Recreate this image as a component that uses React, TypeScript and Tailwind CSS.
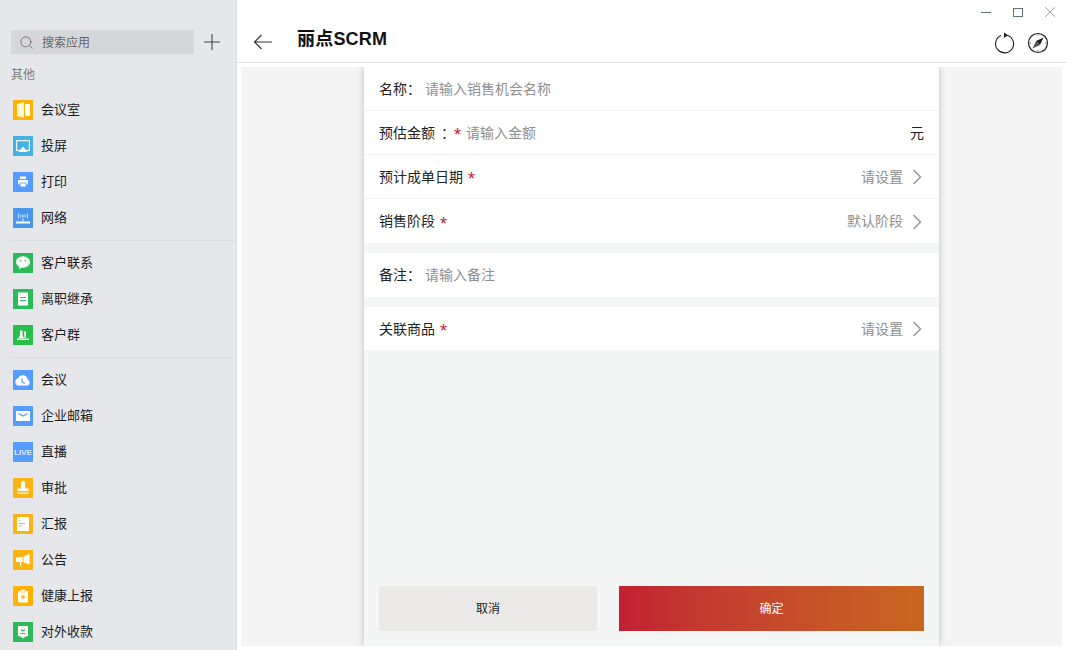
import { Plus, Search, X } from 'lucide-react';
import type { ReactNode } from 'react';

const FONT = "font-['Liberation_Sans','Noto_Sans_CJK_SC',sans-serif]";

const Tile = ({ bg, children }: { bg: string; children: ReactNode }) => (
  <svg width="20" height="20" viewBox="0 0 20 20" className="shrink-0">
    <rect width="20" height="20" fill={bg} />
    {children}
  </svg>
);

const icons: Record<string, ReactNode> = {
  room: (
    <Tile bg="#ffb300">
      <path d="M4 4l7-2v16l-7-2z" fill="#fff" opacity="0.85" />
      <rect x="12" y="4" width="5" height="12" fill="#fff" />
    </Tile>
  ),
  cast: (
    <Tile bg="#44b2e4">
      <path d="M3 4h14v11h-3.500l-1-1.200h3.300v-8.600h-11.600v8.600h3.300l-1 1.200h-3.500z" fill="#fff" opacity="0.9" />
      <path d="M10 10.500l4.500 5.500h-9z" fill="#fff" />
    </Tile>
  ),
  print: (
    <Tile bg="#549cff">
      <rect x="7" y="4.500" width="6" height="2.500" fill="#fff" />
      <rect x="5" y="8" width="10" height="4.500" rx="1" fill="#fff" />
      <rect x="7" y="11" width="6" height="4" fill="#fff" stroke="#549cff" strokeWidth="0.800" />
    </Tile>
  ),
  network: (
    <Tile bg="#4a97ed">
      <rect x="3" y="13.500" width="14" height="2" fill="#fff" />
      <path d="M6 5.500q-1.500 2.500 0 5M14 5.500q1.500 2.500 0 5M8 6.500v3M12 6.500v3" stroke="#dce9fb" fill="none" />
      <rect x="9.500" y="7" width="1" height="2" fill="#fff" />
      <rect x="9.500" y="10" width="1" height="3.500" fill="#dce9fb" />
    </Tile>
  ),
  chat: (
    <Tile bg="#2dba58">
      <ellipse cx="10" cy="9" rx="7" ry="5.800" fill="#fff" />
      <path d="M6.500 13l-.5 3.500 3.500-2.500z" fill="#fff" />
      <circle cx="7.800" cy="7.800" r="0.800" fill="#2dba58" />
      <circle cx="12.200" cy="7.800" r="0.800" fill="#2dba58" />
    </Tile>
  ),
  doc: (
    <Tile bg="#2dba58">
      <rect x="5" y="3.500" width="10" height="13" fill="#fff" />
      <path d="M7 8.500h6M7 11.500h6" stroke="#2dba58" />
    </Tile>
  ),
  group: (
    <Tile bg="#29c04a">
      <path d="M7 5.500h2.500v5l1.500 2.500h-5.500l1.500-2.500zM11 6.500h2v3.500l-.5 3h-1z" fill="#fff" />
      <rect x="4" y="13.500" width="12" height="1.500" fill="#fff" />
    </Tile>
  ),
  cloud: (
    <Tile bg="#549cff">
      <path d="M5.500 15.500a3.500 3.500 0 0 1-.5-6.900 5 5 0 0 1 9.700 1.200 3 3 0 0 1-.2 5.700z" fill="#fff" />
      <path d="M9 8.500v3.500l3 1.500" stroke="#549cff" strokeWidth="1.200" fill="none" />
    </Tile>
  ),
  mail: (
    <Tile bg="#549cff">
      <rect x="3" y="5" width="14" height="10" fill="#fff" />
      <path d="M5.500 7.500l4.500 2.500 4.500-2.500" stroke="#549cff" strokeWidth="1.200" fill="none" />
    </Tile>
  ),
  live: (
    <Tile bg="#549cff">
      <text x="10" y="13" textAnchor="middle" fontSize="8" fontWeight="700" fill="#dbe9ff" fontFamily="'Liberation Sans', sans-serif">
        LIVE
      </text>
    </Tile>
  ),
  stamp: (
    <Tile bg="#fcb415">
      <path d="M8 5a2 2 0 0 1 4 0v3.500l.5 2h3v2.500h-11v-2.500h3l.5-2z" fill="#fff" />
      <rect x="4.500" y="14.500" width="11" height="1.200" fill="#fff" />
    </Tile>
  ),
  report: (
    <Tile bg="#fcb415">
      <rect x="4" y="3" width="12" height="14" fill="#fff" />
      <path d="M6 6.500h1M6 9.500h6M6 12h3" stroke="#fcb415" strokeWidth="1.200" />
    </Tile>
  ),
  notice: (
    <Tile bg="#fcb415">
      <path d="M3 7.500l6.500-.5v5H3z" fill="#fff" />
      <path d="M10.500 6.500l6-2.500v10.500l-6-2.200z" fill="#fff" />
      <rect x="7" y="12" width="1.300" height="4" fill="#fff" />
    </Tile>
  ),
  health: (
    <Tile bg="#ffb300">
      <rect x="5" y="5" width="10" height="11.500" rx="1" fill="#fff" />
      <rect x="7.500" y="3.500" width="5" height="2.500" fill="#fff" stroke="#ffb300" strokeWidth="0.600" />
      <path d="M10 9v4M8 11h4" stroke="#ffb300" strokeWidth="1.300" />
    </Tile>
  ),
  pay: (
    <Tile bg="#2dba58">
      <path d="M5 4h10v10l-2.500.5-2.500 2-2.500-2-2.500-.5z" fill="#fff" />
      <path d="M8 7.500l2 1.500 2-1.500M7.500 11.500h5" stroke="#2dba58" strokeWidth="1.200" fill="none" />
    </Tile>
  ),
};

const groups = [
  [
    ['room', '会议室'],
    ['cast', '投屏'],
    ['print', '打印'],
    ['network', '网络'],
  ],
  [
    ['chat', '客户联系'],
    ['doc', '离职继承'],
    ['group', '客户群'],
  ],
  [
    ['cloud', '会议'],
    ['mail', '企业邮箱'],
    ['live', '直播'],
    ['stamp', '审批'],
    ['report', '汇报'],
    ['notice', '公告'],
    ['health', '健康上报'],
    ['pay', '对外收款'],
  ],
];

const Star = ({ className = 'ml-[5px]' }: { className?: string }) => (
  <span className={`translate-y-[2px] text-[18px] leading-none text-[#c32136] ${className}`}>*</span>
);

const Row = ({ children, line = false, h = 'h-[44px]' }: { children: ReactNode; line?: boolean; h?: string }) => (
  <div className={`flex items-center bg-white px-[15px] pt-[1px] ${h} ${line ? 'border-b border-[#f2f2f2]' : ''}`}>
    {children}
  </div>
);

const Setting = ({ value }: { value: string }) => (
  <div className="ml-auto flex items-center text-[#8f8f8f]">
    <span>{value}</span>
    <svg width="10" height="16" viewBox="0 0 10 16" className="ml-[9px] mr-[2px]">
      <path d="M1.500 1l7 7-7 7" stroke="#999" strokeWidth="1.500" fill="none" />
    </svg>
  </div>
);

export default function App() {
  return (
    <div className={`${FONT} flex h-[650px] w-[1066px] overflow-hidden bg-white text-[14px] text-[#222]`}>
      <aside className="flex h-full w-[237px] shrink-0 flex-col overflow-hidden border-r border-[#dcdcdf] bg-[#e6e7eb]">
        <div className="flex items-center pl-[11px] pt-[30px]">
          <div className="flex h-[24px] w-[183px] items-center bg-[#d6d7da] pl-[8px] pt-[1px] text-[12px] text-[#666]">
            <Search size={15} strokeWidth={1.300} className="text-[#666]" />
            <span className="ml-[8px]">搜索应用</span>
          </div>
          <Plus size={26} strokeWidth={1} className="-my-[1px] ml-[5px] text-[#444]" />
        </div>
        <div className="ml-[11px] mt-[13px] text-[12px] leading-[17px] text-[#7a7a7a]">其他</div>
        <div className="mt-[8px]">
          {groups.map((items, i) => (
            <div key={i} className={i > 0 ? 'ml-[11px] mt-[4px] border-t border-[#dcdde1] pt-[4px]' : ''}>
              {items.map(([icon, label]) => (
                <div key={label} className={`flex h-[36px] items-center ${i > 0 ? 'pl-[2px]' : 'pl-[13px]'}`}>
                  {icons[icon]}
                  <span className="ml-[8px] text-[13px] text-[#1c1c1c]">{label}</span>
                </div>
              ))}
            </div>
          ))}
        </div>
      </aside>

      <main className="flex min-w-0 flex-1 flex-col">
        <div className="flex h-[24px] items-center justify-end text-[#66707a]">
          <div className="h-[1px] w-[10px] bg-[#66707a]" />
          <div className="ml-[22px] h-[9px] w-[10px] border border-[#66707a]" />
          <X size={18} strokeWidth={0.900} className="ml-[18px] mr-[7px]" />
        </div>
        <header className="flex h-[39px] items-start border-b border-[#e3e3e3] pl-[16px] pr-[17px]">
          <svg width="20" height="16" viewBox="0 0 20 16" className="mt-[10px]">
            <path d="M19 8H1.500M8.500 1L1.500 8l7 7" stroke="#333" strokeWidth="1.200" fill="none" />
          </svg>
          <h1 className="ml-[24px] mt-[2px] text-[18px] font-bold leading-[26px] tracking-[0.2px] text-[#111]">丽点SCRM</h1>
          <svg width="22" height="24" viewBox="0 0 22 24" className="ml-auto mt-[6px]">
            <path d="M13 5.200A9 9 0 1 1 7 5.600" stroke="#222" strokeWidth="1.100" fill="none" />
            <path d="M10 2.500l4 2.800-4 2.800z" fill="#222" />
          </svg>
          <svg width="22" height="22" viewBox="0 0 22 22" className="ml-[11px] mt-[8px]">
            <circle cx="11" cy="11" r="9.500" stroke="#222" strokeWidth="1.200" fill="none" />
            <path d="M16.500 5.500l-3.500 7.500-4-4z" fill="#222" />
            <path d="M5.500 16.500l3.500-7.500 4 4z" fill="#222" opacity="0.75" />
            <path d="M11 2.500v1.500M11 18v1.500M2.500 11h1.500M18 11h1.500" stroke="#222" strokeWidth="0.600" />
          </svg>
        </header>

        <div className="m-[4px] flex min-h-0 flex-1 justify-center overflow-hidden bg-[#f4f4f4]">
          <div className="flex w-[575px] flex-col bg-[#f4f5f5] shadow-[0_0_7px_rgba(0,0,0,0.22)]">
            <Row line>
              <span>名称：</span>
              <span className="ml-[5px] -translate-x-px text-[#8f8f8f]">请输入销售机会名称</span>
            </Row>
            <Row line>
              <span>预估金额</span>
              <span className="ml-[6px]">：</span>
              <Star className="-ml-[1px]" />
              <span className="ml-[5px] text-[#8f8f8f]">请输入金额</span>
              <span className="ml-auto">元</span>
            </Row>
            <Row line>
              <span>预计成单日期</span>
              <Star />
              <Setting value="请设置" />
            </Row>
            <Row>
              <span>销售阶段</span>
              <Star />
              <Setting value="默认阶段" />
            </Row>
            <div className="mt-[10px]">
              <Row>
                <span>备注：</span>
                <span className="ml-[5px] -translate-x-px text-[#8f8f8f]">请输入备注</span>
              </Row>
            </div>
            <div className="mt-[10px]">
              <Row h="h-[43px]">
                <span>关联商品</span>
                <Star />
                <Setting value="请设置" />
              </Row>
            </div>
            <div className="mb-[15px] mt-auto flex gap-[22px] px-[15px] text-[12px]">
              <button className="h-[45px] w-[218px] bg-[#eae9e8] text-[#222]">取消</button>
              <button className="h-[45px] flex-1 bg-gradient-to-r from-[#c12033] to-[#c9661f] text-white">确定</button>
            </div>
          </div>
        </div>
      </main>
    </div>
  );
}
